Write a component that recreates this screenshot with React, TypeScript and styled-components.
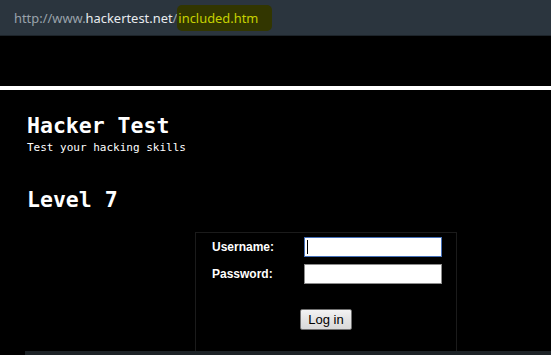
import React from 'react';
import styled, { createGlobalStyle } from 'styled-components';

const GlobalStyle = createGlobalStyle`
	html, body {
		margin: 0;
		padding: 0;
		background: #000;
		overflow: hidden;
	}
`;

const App = () => {
	return (
		<>
			<GlobalStyle />
			<Page>
				<AddressBar>
					<Url>
						<span className='dim'>http://www.</span>
						<span className='host'>hackertest.net</span>
						<span className='dim'>/</span>
						<Marked>included.htm</Marked>
					</Url>
				</AddressBar>
				<TopSpace />
				<Rule />
				<Content>
					<Title>Hacker Test</Title>
					<Tagline>Test your hacking skills</Tagline>
					<Level>Level 7</Level>
					<LoginBox>
						<Fields>
							<Label>Username:</Label>
							<FieldWrap focused>
								<Field type='text' />
							</FieldWrap>
							<Label>Password:</Label>
							<FieldWrap>
								<Field type='password' />
							</FieldWrap>
						</Fields>
						<ButtonRow>
							<Button type='button'>Log in</Button>
						</ButtonRow>
					</LoginBox>
				</Content>
				<Footer />
			</Page>
		</>
	);
};

export default App;

const Page = styled.div`
	width: 551px;
	height: 355px;
	background: #000;
	overflow: hidden;
`;

const AddressBar = styled.div`
	height: 35px;
	background: #2b353e;
	border-bottom: 1px solid #1d242a;
	display: flex;
	align-items: center;
	padding-left: 14px;
	box-sizing: content-box;
`;

const Url = styled.div`
	font-family: 'Noto Sans', 'Open Sans', sans-serif;
	font-size: 12.9px;
	color: #9aa3ab;
	white-space: nowrap;

	.host {
		color: #e8ebee;
	}
`;

const Marked = styled.span`
	color: #c6d200;
	background: #323600;
	padding: 4px 14px 4px 1px;
	border-radius: 5px;
`;

const TopSpace = styled.div`
	height: 50px;
`;

const Rule = styled.div`
	height: 4px;
	background: #fff;
`;

const Content = styled.div`
	padding: 0 27px;
	color: #fff;
`;

const Title = styled.h1`
	margin: 23px 0 0;
	font-family: 'DejaVu Sans Mono', monospace;
	font-weight: bold;
	font-size: 21.5px;
	line-height: 25px;
`;

const Tagline = styled.p`
	margin: 3px 0 0;
	font-family: 'DejaVu Sans Mono', monospace;
	font-size: 11px;
	line-height: 13px;
`;

const Level = styled.h2`
	margin: 33px 0 0;
	font-family: 'DejaVu Sans Mono', monospace;
	font-weight: bold;
	font-size: 21.5px;
	line-height: 25px;
`;

const LoginBox = styled.div`
	margin: 20px 0 0 168px;
	width: 262px;
	height: 119px;
	box-sizing: border-box;
	border: 1px solid #1b1b1b;
	border-bottom: none;
	padding: 4px 0 0 16px;
`;

const Fields = styled.div`
	display: grid;
	grid-template-columns: 92px 138px;
	row-gap: 7px;
	align-items: center;
`;

const Label = styled.span`
	font-family: 'Liberation Sans', Arial, sans-serif;
	font-weight: bold;
	font-size: 12px;
	color: #fff;
`;

const FieldWrap = styled.span<{ focused?: boolean }>`
	position: relative;
	display: block;
	height: 20px;

	input {
		border-color: ${(p) => (p.focused ? '#4570b8' : '#8c8c8c')};
	}

	&::after {
		content: '';
		display: ${(p) => (p.focused ? 'block' : 'none')};
		position: absolute;
		left: 3px;
		top: 3px;
		width: 1px;
		height: 14px;
		background: #000;
	}
`;

const Field = styled.input`
	display: block;
	width: 138px;
	height: 20px;
	box-sizing: border-box;
	margin: 0;
	padding: 0 2px;
	border: 1px solid #8c8c8c;
	background: #fff;
	outline: none;
	font-family: 'Liberation Sans', Arial, sans-serif;
	font-size: 13px;
`;

const ButtonRow = styled.div`
	display: flex;
	justify-content: center;
	margin: 25px 0 0 -16px;
`;

const Button = styled.button`
	width: 52px;
	height: 21px;
	box-sizing: border-box;
	margin: 0;
	padding: 0;
	border: 1px solid #707070;
	border-radius: 2px;
	background: linear-gradient(#f3f3f3, #e4e4e4 50%, #d9d9d9);
	font-family: 'Liberation Sans', Arial, sans-serif;
	font-size: 13px;
	color: #000;
	line-height: 19px;
`;

const Footer = styled.div`
	margin-left: 25px;
	height: 4px;
	background: #1d2327;
`;
